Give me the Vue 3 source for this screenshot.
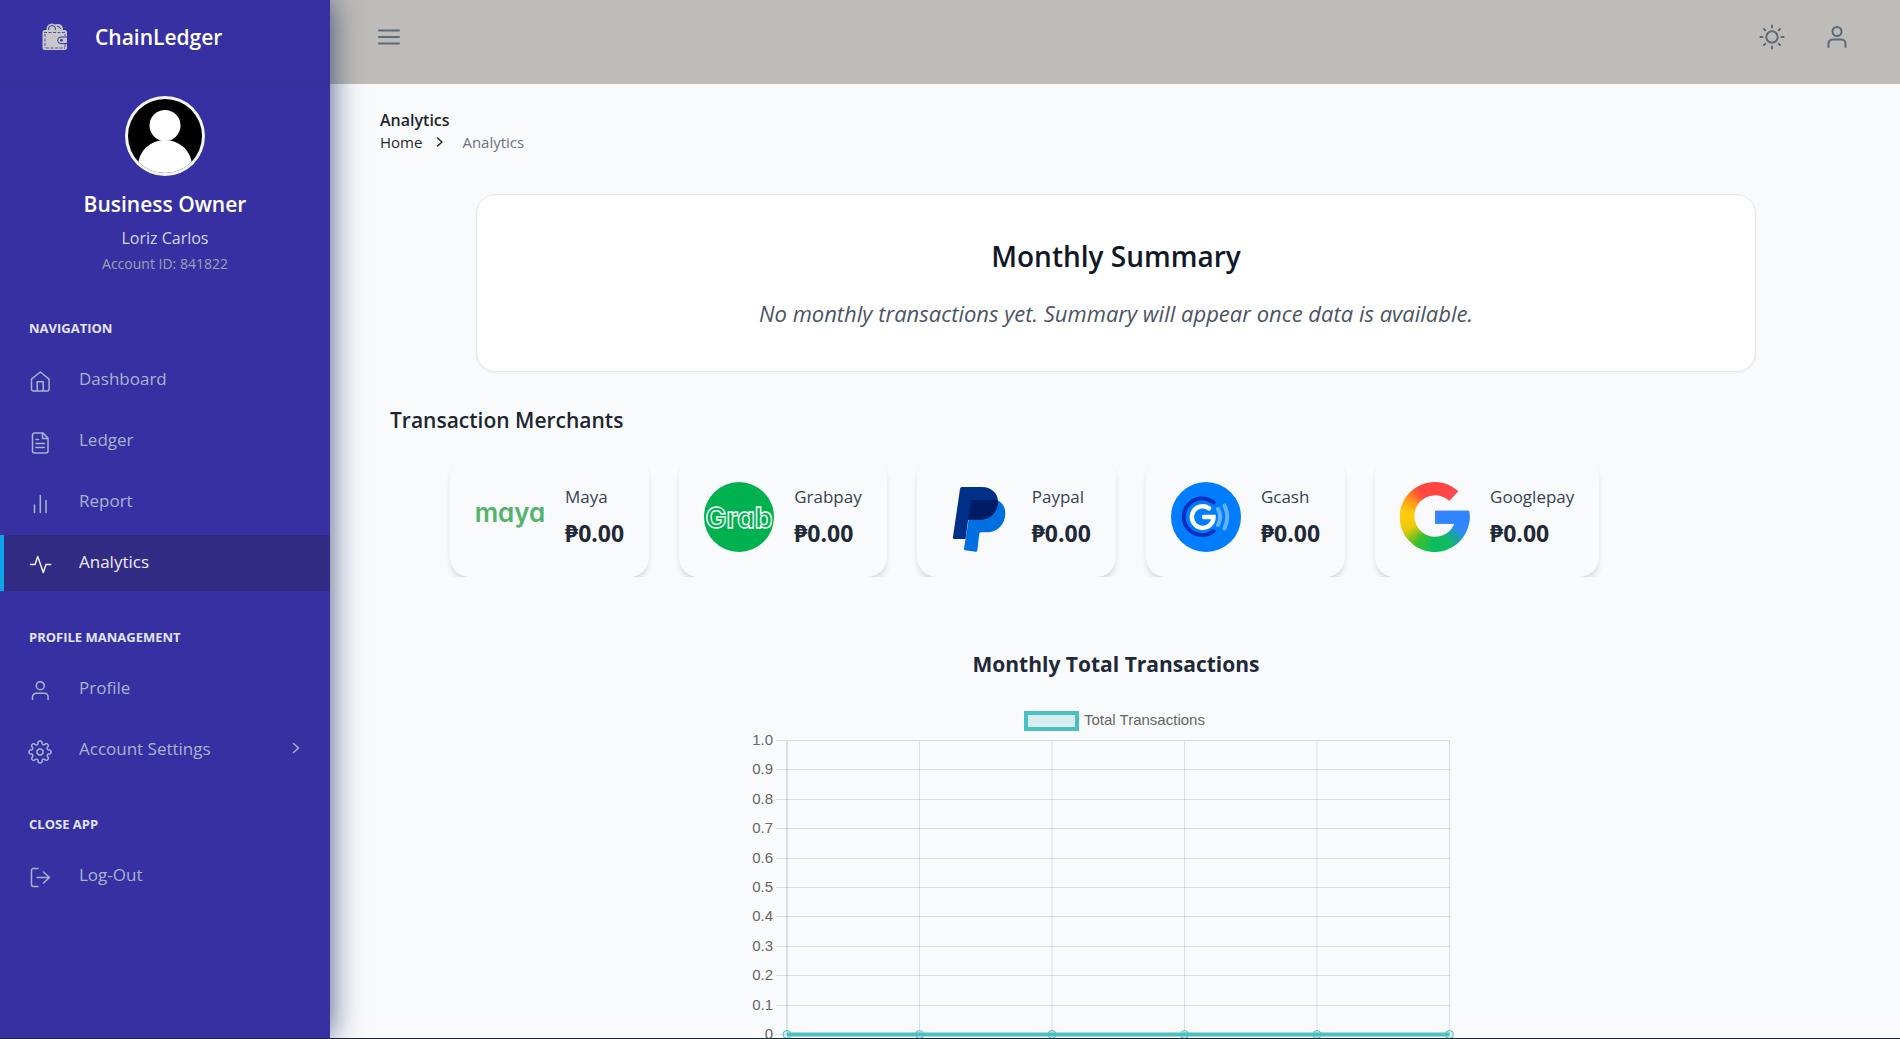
<script setup>
const sections = [
  {
    caption: 'NAVIGATION',
    items: [
      { label: 'Dashboard', icon: 'home' },
      { label: 'Ledger', icon: 'file' },
      { label: 'Report', icon: 'bars' },
      { label: 'Analytics', icon: 'pulse', active: true },
    ],
  },
  {
    caption: 'PROFILE MANAGEMENT',
    items: [
      { label: 'Profile', icon: 'user' },
      { label: 'Account Settings', icon: 'gear', expandable: true },
    ],
  },
  { caption: 'CLOSE APP', items: [{ label: 'Log-Out', icon: 'logout' }] },
]

const icons = {
  home: 'M3.5 9.2 12.3 2l8.8 7.2v9.8a2 2 0 0 1-2 2H5.5a2 2 0 0 1-2-2zM9.2 21v-9.2h6V21',
  file: 'M15 2H6.5A2 2 0 0 0 4.500 4v16a2 2 0 0 0 2 2H18a2 2 0 0 0 2-2V7zM14.500 2v5.500H20M8 8.500h2.500M8 12.500h8.500M8 16.500h8.500',
  bars: 'M6.500 13v7.500M12.300 3.500v17M18 8.500v12',
  pulse: 'M2.500 11.500H7L9.700 3.500l5.600 16 2.700-8h4.700',
  user: 'M12.300 2.700a4 4 0 1 1 0 8 4 4 0 0 1 0-8M4.500 20.500V18a3.800 3.800 0 0 1 3.800-3.800h8A3.800 3.800 0 0 1 20.100 18v2.500',
  gear: 'M12 9a3 3 0 1 1 0 6 3 3 0 0 1 0-6M19.400 15a1.650 1.650 0 0 0 .33 1.820l.06.06a2 2 0 1 1-2.830 2.830l-.06-.06a1.650 1.650 0 0 0-2.820 1.170V21a2 2 0 0 1-4 0v-.09A1.650 1.650 0 0 0 7.200 19.730l-.06.06a2 2 0 1 1-2.830-2.830l.06-.06A1.650 1.650 0 0 0 3.090 14H3a2 2 0 0 1 0-4h.09A1.650 1.650 0 0 0 4.270 7.200l-.06-.06a2 2 0 1 1 2.830-2.830l.06.06A1.650 1.650 0 0 0 10 3.090V3a2 2 0 0 1 4 0v.09a1.650 1.650 0 0 0 2.820 1.180l.06-.06a2 2 0 1 1 2.830 2.830l-.06.06A1.650 1.650 0 0 0 20.910 10H21a2 2 0 0 1 0 4h-.09a1.650 1.650 0 0 0-1.510 1z',
  logout: 'M10 2.500H5.500a2 2 0 0 0-2 2v14a2 2 0 0 0 2 2H10M9 11.500h12.500M15.500 6l6 5.500-6 5.500',
}

const merchants = [
  { id: 'maya', name: 'Maya' },
  { id: 'grab', name: 'Grabpay' },
  { id: 'paypal', name: 'Paypal' },
  { id: 'gcash', name: 'Gcash' },
  { id: 'google', name: 'Googlepay' },
]

const ticks = ['1.0', '0.9', '0.8', '0.7', '0.6', '0.5', '0.4', '0.3', '0.2', '0.1', '0'].map(
  (label, i) => ({ label, y: 41.5 + Math.round(i * 29.4) }),
)
const columns = Array.from({ length: 6 }, (_, i) => 37 + i * 132.5)
</script>

<template>
  <div class="layout">
    <aside class="sidebar">
      <div class="brand">
        <svg class="brand-logo" width="28" height="30" viewBox="0 0 28 30">
          <circle cx="11" cy="8" r="5.500" fill="#c9c7c8" />
          <circle cx="17" cy="8" r="5" fill="#c9c7c8" />
          <circle cx="11" cy="8" r="3.500" fill="none" stroke="#3730a3" stroke-width="1" />
          <path d="M16 5a4 4 0 0 1 3.500 3" fill="none" stroke="#3730a3" />
          <rect x="1.500" y="9" width="24.500" height="20" rx="2.500" fill="#c9c7c8" />
          <path d="M3 11.500h21M4 13v14M5 27h19M24 13v2M24 23v4" fill="none" stroke="#3730a3" stroke-dasharray="3 1.500" stroke-width="0.800" />
          <path d="M26.500 16h-6.500a3.300 3.300 0 0 0 0 6.600h6.500z" fill="#c9c7c8" stroke="#3730a3" />
          <circle cx="20.500" cy="19.300" r="1.300" fill="#3730a3" />
        </svg>
        <span class="brand-name">ChainLedger</span>
      </div>

      <div class="account">
        <svg class="avatar" viewBox="0 0 80 80" width="80" height="80" role="img" aria-label="Avatar">
          <defs>
            <clipPath id="avatar-clip"><circle cx="40" cy="40" r="37" /></clipPath>
          </defs>
          <circle cx="40" cy="40" r="40" fill="#f5f5f5" />
          <g clip-path="url(#avatar-clip)">
            <rect width="80" height="80" fill="#000" />
            <circle cx="40" cy="29.500" r="15.500" fill="#fff" />
            <path d="M13 80V70a27 26 0 0 1 54 0v10z" fill="#fff" />
          </g>
        </svg>
        <h1 class="role">Business Owner</h1>
        <p class="person">Loriz Carlos</p>
        <p class="account-id">Account ID: 841822</p>
      </div>

      <nav>
        <section v-for="section in sections" :key="section.caption">
          <h2 class="caption">{{ section.caption }}</h2>
          <ul class="menu">
            <li v-for="item in section.items" :key="item.label">
              <a href="#" class="menu-link" :class="{ active: item.active }">
                <svg class="menu-icon" width="24" height="24" viewBox="0 0 24 24">
                  <path :d="icons[item.icon]" />
                </svg>
                <span class="menu-label">{{ item.label }}</span>
                <svg v-if="item.expandable" class="menu-arrow" width="8" height="12" viewBox="0 0 8 12">
                  <path d="m1.500 1.500 5 4.500-5 4.500" />
                </svg>
              </a>
            </li>
          </ul>
        </section>
      </nav>
    </aside>

    <div class="page">
      <header class="topbar">
        <button type="button" class="icon-button" aria-label="Toggle menu">
          <svg width="22" height="22" viewBox="0 0 22 22"><path d="M1 4.500h20M1 11h20M1 17.500h20" /></svg>
        </button>
        <div class="topbar-actions">
          <button type="button" class="icon-button" aria-label="Theme">
            <svg width="26" height="26" viewBox="0 0 26 26">
              <circle cx="13" cy="13" r="5.700" />
              <path d="M13 1.500v2M13 22.500v2M1.500 13h2M22.500 13h2M5 5l1.300 1.300M19.700 19.700l1.300 1.300M5 21l1.300-1.300M19.700 6.300l1.300-1.300" />
            </svg>
          </button>
          <button type="button" class="icon-button" aria-label="User">
            <svg width="26" height="26" viewBox="0 0 26 26">
              <circle cx="13" cy="7.500" r="4.500" />
              <path d="M4.500 23v-3.500a4 4 0 0 1 4-4h9a4 4 0 0 1 4 4V23" />
            </svg>
          </button>
        </div>
      </header>

      <main class="content">
        <h2 class="page-title">Analytics</h2>
        <nav class="crumbs" aria-label="Breadcrumb">
          <a href="#">Home</a>
          <svg width="8" height="10" viewBox="0 0 8 10"><path d="m1.500 1 4.500 4-4.500 4" /></svg>
          <span>Analytics</span>
        </nav>

        <section class="summary">
          <h2>Monthly Summary</h2>
          <p>No monthly transactions yet. Summary will appear once data is available.</p>
        </section>

        <h3 class="merchants-title">Transaction Merchants</h3>
        <div class="merchants">
          <article v-for="m in merchants" :key="m.id" class="merchant">
            <svg v-if="m.id === 'maya'" width="70" height="70" viewBox="0 0 70 70">
              <text x="35" y="40" text-anchor="middle" class="maya-mark">maya</text>
            </svg>
            <svg v-else-if="m.id === 'grab'" width="70" height="70" viewBox="0 0 70 70">
              <circle cx="35" cy="35" r="35" fill="#00b14f" />
              <text x="35" y="46" text-anchor="middle" class="grab-mark">Grab</text>
            </svg>
            <svg v-else-if="m.id === 'paypal'" width="70" height="70" viewBox="0 0 70 70">
              <path d="M55 18c5.500 2.500 8.300 7 8.300 13.500 0 11-8 18.800-18.500 18.800h-5.500c-1.200 0-2 .8-2.100 2L35.300 68.500c-.1 1-.8 1.500-1.800 1.300l-10.500-1.500c-.8-.1-1.200-.7-1-1.500L29.700 18z" fill="#0070e0" />
              <path d="M20 5h19.500c10 0 16.500 6.200 16.500 14.500 0 11-8 18.200-18 18.200H26.200L23.500 57H12.200c-1 0-1.500-.6-1.300-1.500L18 7c.2-1.300.8-2 2-2z" fill="#003087" />
              <path d="M31.500 18h24.300c1.200 11-7.300 19.700-17.800 19.700H26.200l2.800-17.500c.2-1.400 1-2.200 2.500-2.200z" fill="#001c64" />
            </svg>
            <svg v-else-if="m.id === 'gcash'" width="70" height="70" viewBox="0 0 70 70">
              <circle cx="35" cy="35" r="35" fill="#007dfe" />
              <g fill="none" stroke-linecap="round">
                <path d="M42.500 20.500a18.300 18.300 0 1 0 0 28.500" stroke="#0a2ebd" stroke-width="4" />
                <path d="M38 26.300A10.800 10.800 0 1 0 42.500 35H33" stroke="#fff" stroke-width="4.500" />
                <path d="M47 27q4.500 8 0 16M53.500 23.500q5.500 11.500 0 23" stroke="#66b2ff" stroke-width="4" />
              </g>
            </svg>
            <div v-else class="google-mark" role="img" aria-label="Google"></div>
            <div>
              <h4 class="merchant-name">{{ m.name }}</h4>
              <p class="merchant-amount">₱0.00</p>
            </div>
          </article>
        </div>

        <section class="chart">
          <h3>Monthly Total Transactions</h3>
          <svg width="732" height="345" viewBox="0 0 732 345" role="img" aria-label="Total transactions per month">
            <rect x="276" y="14" width="51" height="16" class="legend-box" />
            <text x="334" y="26">Total Transactions</text>
            <g v-for="tick in ticks" :key="tick.label">
              <line x1="26" :y1="tick.y" x2="700" :y2="tick.y" class="grid" />
              <text x="23" :y="tick.y + 4" text-anchor="end">{{ tick.label }}</text>
            </g>
            <line v-for="x in columns" :key="x" :x1="x" y1="42" :x2="x" y2="335" class="grid" />
            <line x1="37" y1="42" x2="37" y2="335" class="grid" />
            <line x1="37" y1="335.500" x2="699.500" y2="335.500" class="series" />
            <circle v-for="x in columns" :key="'p' + x" :cx="x" cy="335.500" r="4" class="point" />
          </svg>
        </section>
      </main>
    </div>
  </div>
</template>

<style>
body {
  margin: 0;
  background: #f9fafc;
}
</style>

<style scoped>
.layout {
  display: flex;
  box-sizing: border-box;
  height: 100vh;
  overflow: hidden;
  border-bottom: 1px solid #1d2630;
  background: #f9fafc;
  color: #1d2630;
  font-family: "Open Sans", "Noto Sans", sans-serif;
}

h1, h2, h3, h4, p, ul {
  margin: 0;
  padding: 0;
}

a {
  color: inherit;
  text-decoration: none;
}

.sidebar {
  position: relative;
  z-index: 1;
  flex: none;
  width: 330px;
  background: #3730a3;
  box-shadow: 0 0 30px rgba(27, 46, 94, 0.8);
}

.brand {
  display: flex;
  box-sizing: border-box;
  height: 84px;
  padding: 21px 0 0 41px;
  gap: 26px;
  border-bottom: 1px solid #352f88;
}

.brand-name {
  color: #fff;
  font-size: 21px;
  font-weight: 600;
  line-height: 32px;
}

.account {
  display: flex;
  flex-direction: column;
  align-items: center;
  padding: 12px 0 8px;
}

.role {
  margin-top: 12px;
  color: #fff;
  font-size: 21px;
  font-weight: 600;
  line-height: 32px;
}

.person {
  margin-top: 6px;
  color: #d6d5ec;
  font-size: 16px;
  line-height: 24px;
}

.account-id {
  margin-top: 4px;
  color: #9ca3af;
  font-size: 14px;
  line-height: 20px;
}

.caption {
  padding: 36px 29px 14px;
  color: #e3e4f3;
  font-size: 13px;
  font-weight: 700;
  line-height: 20px;
}

.menu {
  display: flex;
  flex-direction: column;
  gap: 5px;
  list-style: none;
}

.menu-link {
  display: flex;
  align-items: flex-start;
  box-sizing: border-box;
  height: 56px;
  padding: 15px 30px 0 24px;
  border-left: 4px solid transparent;
  color: #a9b3d0;
  font-size: 17px;
  line-height: 24px;
}

.menu-link.active {
  border-color: #0ea5e9;
  background: #312b84;
  color: #eceef4;
}

.menu-icon {
  margin: 3px 27px 0 0;
}

.menu-label {
  flex: 1;
}

.menu-arrow {
  margin-top: 5px;
}

.menu-link svg,
.icon-button svg,
.crumbs svg {
  flex: none;
  fill: none;
  stroke: currentColor;
  stroke-width: 1.5;
  stroke-linecap: round;
  stroke-linejoin: round;
}

.page {
  display: flex;
  flex: 1;
  flex-direction: column;
  min-width: 0;
}

.topbar {
  display: flex;
  flex: none;
  align-items: flex-start;
  justify-content: space-between;
  box-sizing: border-box;
  height: 84px;
  padding: 22px 48px 0 44px;
  background: #bebcb8;
}

.topbar-actions {
  display: flex;
  gap: 35px;
}

.icon-button {
  display: grid;
  place-items: center;
  width: 30px;
  height: 30px;
  padding: 0;
  border: 0;
  background: none;
  color: #5b6b79;
}

.icon-button svg {
  stroke-width: 2;
}

.content {
  padding: 24px 48px 0 50px;
}

.page-title {
  font-size: 16px;
  font-weight: 600;
  line-height: 24px;
}

.crumbs {
  display: flex;
  align-items: center;
  font-size: 15px;
  line-height: 20px;
}

.crumbs svg {
  margin: 0 18px 0 14px;
}

.crumbs span {
  color: #6b7280;
}

.summary {
  box-sizing: border-box;
  max-width: 1280px;
  margin: 42px auto 0;
  padding: 41px 24px 42px;
  border: 1px solid #e5e7eb;
  border-radius: 20px;
  background: #fff;
  box-shadow: 0 1px 3px rgba(0, 0, 0, 0.06);
  text-align: center;
}

.summary h2 {
  color: #111827;
  font-size: 28px;
  font-weight: 600;
  line-height: 40px;
}

.summary p {
  margin-top: 21px;
  color: #4b5563;
  font-size: 22px;
  font-style: italic;
  line-height: 32px;
}

.merchants-title {
  margin: 32px 0 21px 10px;
  font-size: 21px;
  font-weight: 600;
  line-height: 32px;
}

.merchants {
  display: flex;
  gap: 30px;
  overflow: hidden;
  padding: 0 10px 0 70px;
}

.merchant {
  display: flex;
  flex: none;
  align-items: center;
  gap: 20px;
  box-sizing: border-box;
  height: 120px;
  padding: 0 25px;
  border-radius: 20px;
  background: #f9fafc;
  box-shadow: 0 5px 6px -1px rgba(0, 0, 0, 0.14);
}

.merchant-name {
  color: #374151;
  font-size: 17px;
  font-weight: 500;
  line-height: 24px;
}

.merchant-amount {
  margin-top: 8px;
  color: #1f2937;
  font-size: 23px;
  font-weight: 700;
  line-height: 32px;
}

.maya-mark {
  fill: #52b46c;
  font-family: "Inter", "Lato", sans-serif;
  font-feature-settings: "cv11";
  font-size: 26px;
  font-weight: 600;
}

.grab-mark {
  fill: none;
  stroke: #fff;
  stroke-width: 1.3;
  font-family: "Inter", "Lato", sans-serif;
  font-feature-settings: "cv11";
  font-size: 28px;
  font-weight: 700;
}

.google-mark {
  width: 70px;
  height: 70px;
  background:
    linear-gradient(#3186ff, #3186ff) 35px 28px / 35px 14px no-repeat,
    conic-gradient(#ff4641 0deg 15deg, #fc4b5a 45deg, #3186ff 60deg 115deg, #1d9fb0 132deg, #0ebc5f 155deg 185deg, #3cc02c 215deg, #e8c80c 245deg, #ffcc0c 265deg 280deg, #ff9a17 303deg, #ff4641 330deg);
  clip-path: path("M58.300 9.300 49.300 19A20.700 20.700 0 1 0 54.300 41.700H35V28.700H69A35 35 0 1 1 58.300 9.300z");
}

.chart {
  margin-top: 71px;
  text-align: center;
}

.chart h3 {
  margin-bottom: 19px;
  color: #1f2937;
  font-size: 21px;
  font-weight: 700;
  line-height: 32px;
}

.chart svg {
  display: block;
  max-width: 100%;
  margin: 0 auto;
}

.chart text {
  fill: #666;
  font-family: "Liberation Sans", Arial, sans-serif;
  font-size: 15px;
}

.grid {
  stroke: rgba(0, 0, 0, 0.11);
  stroke-width: 1;
}

.legend-box {
  fill: rgba(75, 192, 192, 0.2);
  stroke: #4bc0c0;
  stroke-width: 4;
}

.series {
  stroke: #4bc0c0;
  stroke-width: 4;
}

.point {
  fill: rgba(75, 192, 192, 0.2);
  stroke: #4bc0c0;
  stroke-width: 1;
}
</style>
